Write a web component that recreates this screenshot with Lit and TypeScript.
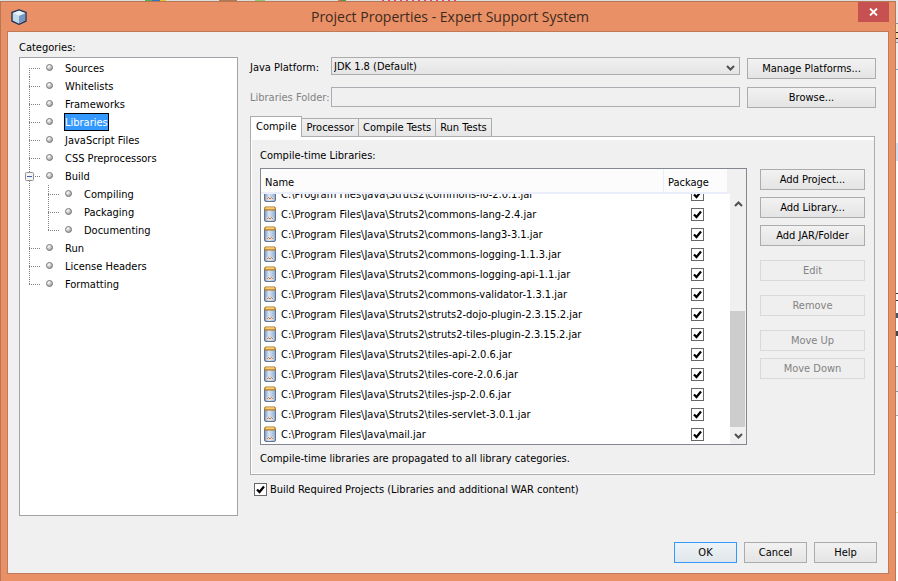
import { LitElement, html, css, svg, nothing } from "lit";
import { classMap } from "lit/directives/class-map.js";

interface Category {
  name: string;
  children?: string[];
}

const CATEGORIES: Category[] = [
  { name: "Sources" },
  { name: "Whitelists" },
  { name: "Frameworks" },
  { name: "Libraries" },
  { name: "JavaScript Files" },
  { name: "CSS Preprocessors" },
  { name: "Build", children: ["Compiling", "Packaging", "Documenting"] },
  { name: "Run" },
  { name: "License Headers" },
  { name: "Formatting" },
];

const TABS = ["Compile", "Processor", "Compile Tests", "Run Tests"];

const LIBRARIES = [
  "Struts2\\commons-io-2.0.1.jar",
  "Struts2\\commons-lang-2.4.jar",
  "Struts2\\commons-lang3-3.1.jar",
  "Struts2\\commons-logging-1.1.3.jar",
  "Struts2\\commons-logging-api-1.1.jar",
  "Struts2\\commons-validator-1.3.1.jar",
  "Struts2\\struts2-dojo-plugin-2.3.15.2.jar",
  "Struts2\\struts2-tiles-plugin-2.3.15.2.jar",
  "Struts2\\tiles-api-2.0.6.jar",
  "Struts2\\tiles-core-2.0.6.jar",
  "Struts2\\tiles-jsp-2.0.6.jar",
  "Struts2\\tiles-servlet-3.0.1.jar",
  "mail.jar",
].map((file) => "C:\\Program Files\\Java\\" + file);

const chevron = (up: boolean) => html`<svg width="9" height="6" viewBox="0 0 9 6" aria-hidden="true">
  <path d=${up ? "M1 5 4.5 1.5 8 5" : "M1 1 4.5 4.5 8 1"} fill="none" stroke="#505050" stroke-width="2" />
</svg>`;

/* Square tick box, shared by the table and the form. */
const tickBox = css`
  input[type="checkbox"] {
    appearance: none; flex: none; box-sizing: border-box; width: 13px; height: 13px; margin: 0; border: 1px solid #686868; background: #fff;
  }
  input[type="checkbox"]:checked {
    background: #fff url("data:image/svg+xml,%3Csvg xmlns='http://www.w3.org/2000/svg' viewBox='0 0 11 11'%3E%3Cpath d='M2 5.5 4.5 8 9 2.5' fill='none' stroke='%23000' stroke-width='2.2'/%3E%3C/svg%3E") center / 11px 11px no-repeat;
  }
`;

/* The category tree, with its dotted connectors. */
class CategoryTree extends LitElement {
  static properties = { selected: { state: true } };
  declare selected: string;

  constructor() {
    super();
    this.selected = "Libraries";
  }

  static styles = css`
    :host { display: block; box-sizing: border-box; background: #fff; border: 1px solid #a0a4a8; padding-top: 1px; }
    ul { list-style: none; margin: 0; padding: 0; }
    .row { display: flex; height: 18px; }
    svg { display: block; flex: none; }
    .item {
      font: inherit; color: #000; background: none; border: 1px solid transparent;
      padding: 2px 0 0; margin: 0; white-space: nowrap;
    }
    .item.selected { background: #3399ff; color: #fff; border-color: #000; }
  `;

  private row(name: string, depth: number, first: boolean, last: boolean, parent = false) {
    const x = 9 + depth * 19;
    const width = 44 + depth * 19;
    return html`<div class="row">
      <svg width=${width} height="18" viewBox="0 0 ${width} 18" aria-hidden="true">
        <defs>
          <radialGradient id="ball" cx="0.35" cy="0.3" r="0.75">
            <stop offset="0" stop-color="#fff" /><stop offset="0.6" stop-color="#c4c4c4" /><stop offset="1" stop-color="#8a8a8a" />
          </radialGradient>
        </defs>
        <g stroke="#808080" stroke-dasharray="1 1" fill="none">
          ${depth ? svg`<path d="M9.5 0V18" />` : nothing}
          <path d="M${x + 0.5} ${first && !depth ? 9 : 0}V${last ? 10 : 18}" />
          <path d="M${x} 9.5H${x + 12}" />
        </g>
        ${parent
          ? svg`<rect x="5.5" y="5.5" width="8" height="8" rx="1" fill="#f4f4f4" stroke="#919191" />
              <path d="M7 9.5h5" stroke="#3f5fb0" />`
          : nothing}
        <circle cx=${x + 20.5} cy="8.5" r="3" fill="url(#ball)" stroke="#7c7c7c" />
      </svg>
      <button class=${classMap({ item: true, selected: this.selected === name })}
        @click=${() => { this.selected = name; }}>${name}</button>
    </div>`;
  }

  render() {
    return html`<ul aria-label="Categories">
      ${CATEGORIES.map((c, i) => html`<li>
        ${this.row(c.name, 0, i === 0, i === CATEGORIES.length - 1, !!c.children)}
        ${c.children
          ? html`<ul>${c.children.map((n, k) => html`<li>${this.row(n, 1, k === 0, k === c.children!.length - 1)}</li>`)}</ul>`
          : nothing}
      </li>`)}
    </ul>`;
  }
}
customElements.define("category-tree", CategoryTree);

/* The table of libraries, with its scroll bar. */
class LibraryList extends LitElement {
  static styles = [tickBox, css`
    :host { display: flex; box-sizing: border-box; background: #fff; border: 1px solid #828790; overflow: hidden; }
    table { flex: 1; display: flex; flex-direction: column; min-width: 0; min-height: 0; }
    thead { display: block; flex: none; background: #f0f0f0; padding-right: 3px; }
    tbody { flex: 1; display: flex; flex-direction: column; justify-content: flex-end; min-height: 0; overflow: hidden; }
    tr { display: grid; grid-template-columns: 1fr 66px; flex: none; height: 20px; }
    thead tr { grid-template-columns: 1fr 63px; height: 25px; box-sizing: border-box; background: #fcfcfc; border-bottom: 2px solid #e9eefa; }
    th { font-weight: normal; text-align: left; padding: 4px 0 0 4px; line-height: 19px; }
    th:first-child { border-right: 1px solid #e9eefa; }
    td { display: flex; align-items: center; padding: 0 0 0 3px; gap: 5px; white-space: nowrap; }
    td:last-child { padding-left: 27px; }
    .path { padding-top: 2px; }
    svg { display: block; flex: none; }
    .bar { flex: none; width: 16px; display: flex; flex-direction: column; background: #f0f0f0; padding-top: 26px; box-sizing: border-box; }
    .bar button { flex: none; height: 17px; border: 0; padding: 0; background: none; display: grid; place-items: center; }
    .track { flex: 1; display: flex; flex-direction: column; justify-content: flex-end; min-height: 0; }
    .thumb { height: 54%; margin-right: 1px; background: #cdcdcd; }
  `];

  render() {
    return html`
      <table>
        <thead><tr><th>Name</th><th>Package</th></tr></thead>
        <tbody>
          ${LIBRARIES.map((path) => html`<tr>
            <td>
              <svg width="12" height="16" viewBox="0 0 12 16" aria-hidden="true">
                <defs>
                  <linearGradient id="glass"><stop offset="0" stop-color="#7695bd" /><stop offset="0.4" stop-color="#dce9f8" /><stop offset="1" stop-color="#8cabd2" /></linearGradient>
                </defs>
                <path d="M.5 3.5h11v10.500q0 1.500-1.500 1.500h-8q-1.500 0-1.500-1.500z" fill="url(#glass)" stroke="#65758c" />
                <rect x="0.500" y="1" width="11" height="3" rx="1.500" fill="#f0b44c" stroke="#a8701c" />
                <path d="M2 2h8" stroke="#ffe2a4" />
                <path d="M2.500 11h7v3h-7z" fill="#e6dcd8" />
                <path d="M3 13q1.500-3 3 0q1.500-3 3 0" fill="none" stroke="#b87d58" />
              </svg>
              <span class="path">${path}</span>
            </td>
            <td><input type="checkbox" checked aria-label="Package ${path}" /></td>
          </tr>`)}
        </tbody>
      </table>
      <div class="bar">
        <button aria-label="Scroll up">${chevron(true)}</button>
        <div class="track"><div class="thumb"></div></div>
        <button aria-label="Scroll down">${chevron(false)}</button>
      </div>`;
  }
}
customElements.define("library-list", LibraryList);

class AppRoot extends LitElement {
  static properties = { tab: { state: true } };
  declare tab: string;

  constructor() {
    super();
    this.tab = TABS[0];
  }

  static styles = [tickBox, css`
    :host {
      display: flex; box-sizing: border-box; min-height: 100vh; padding: 1px 2px 0 0;
      font: 11px/14px "DejaVu Sans Condensed", "DejaVu Sans", sans-serif; color: #000;
      background:
        linear-gradient(90deg, transparent 145px, #4caf50 145px 152px, #2f74c0 152px 160px, #e8c52a 160px 166px, transparent 166px 219px, #b07a50 219px 237px, transparent 237px 255px, #8ccf70 255px 265px, transparent 265px 338px, #e07038 338px 341px, #4f9a48 341px 346px, transparent 346px) 0 0 / 100% 1px no-repeat,
        repeating-linear-gradient(90deg, #e84070 0 2px, transparent 2px 6px) 382px 0 / 75px 1px no-repeat,
        linear-gradient(#e8e8e8 23px, #8a93a0 23px 24px, #f2e6cc 24px 32px, #302020 32px 33px, #f2d9a8 33px 38px, #302020 38px 39px, #ddd 39px 42px, #8a93a0 42px 43px, #eee 43px 69px, #7aa6c8 69px 70px, #f6f6f6 70px 143px, #cfdff2 143px 161px, #fff 161px 293px, #333 293px 294px, #fff 294px 300px, #333 300px 301px, #fff 301px 313px, #456 313px 318px, #fff 318px 331px, #444 331px 336px, #fff 336px 366px, #8a93a0 366px 367px, #e6e6e6 367px 391px, #8a93a0 391px 392px, #f0f0f0 392px 415px, #aaa 415px 416px, #fff 416px 512px, #f0d8a8 512px 513px, #fff 513px) right top / 2px 100% no-repeat,
        #dcdfe0;
    }
    .dialog { flex: 1; display: flex; flex-direction: column; min-width: 0; background: #ea9066; border: 1px solid #b97654; border-bottom: 0; padding: 0 6px 7px; }
    .titlebar { display: grid; grid-template-columns: 1fr auto 1fr; align-items: center; height: 29px; padding-left: 4px; }
    h1 { margin: 0; font: 14px/20px "Open Sans", sans-serif; color: #3c2a20; }
    .titlebar svg { display: block; }
    .close { justify-self: end; align-self: start; width: 31px; height: 20px; border: 0; padding: 0; background: #c75050; display: grid; place-items: center; }
    .content { flex: 1; display: flex; flex-direction: column; background: #f0f0f0; border: 1px solid #c07a58; padding: 9px 11px 10px; }
    .heading { font: inherit; margin: 0; white-space: nowrap; }
    .columns { flex: 1; display: grid; grid-template-columns: 219px minmax(0, 1fr); column-gap: 12px; grid-template-rows: auto 1fr; row-gap: 2px; }
    category-tree { grid-row: 2; }
    .settings { grid-area: 2 / 2; display: flex; flex-direction: column; min-width: 0; padding: 0 1px 20px 0; }
    .form { display: grid; grid-template-columns: 74px 1fr 129px; grid-template-rows: 22px 21px; gap: 8px 7px; margin-bottom: 8px; white-space: nowrap; }
    .form label { align-self: center; }
    .form .off { color: #838383; }
    .push {
      font: inherit; color: #000; box-sizing: border-box; height: 21px; padding: 0; white-space: nowrap;
      border: 1px solid #acacac; background: linear-gradient(#f2f2f2, #e4e4e4);
    }
    .push:disabled { color: #838383; border-color: #d9d9d9; background: #efefef; }
    .form .push { align-self: end; }
    .combo { position: relative; height: 18px; }
    .combo svg { position: absolute; right: 5px; top: 8px; pointer-events: none; }
    select {
      appearance: none; box-sizing: border-box; display: block; width: 100%; height: 18px; font: inherit; color: #000;
      border: 1px solid #acacac; border-radius: 0; padding: 2px 20px 0 2px; background: linear-gradient(#f0f0f0, #e5e5e5);
    }
    .folder { box-sizing: border-box; width: 100%; height: 20px; border: 1px solid #abadb3; background: #f0f0f0; font: inherit; padding: 0 2px; }
    .tabs { display: flex; align-items: flex-end; }
    .tab {
      font: inherit; color: #000; height: 18px; padding: 0 4px; border: 1px solid #acacac; border-bottom: 0; margin-left: -1px;
      background: linear-gradient(#f0f0f0, #e6e6e6); white-space: nowrap; box-sizing: border-box;
    }
    .tab.active { height: 21px; margin: 0 0 -1px; padding: 0 5px 1px; background: #fff; z-index: 1; }
    .panel {
      flex: 1; display: grid; grid-template-columns: minmax(0, 1fr) 105px; grid-template-rows: auto 1fr auto; gap: 5px 13px;
      margin-right: 1px; box-sizing: border-box; border: 1px solid #acacac; padding: 12px 9px 8px;
      box-shadow: inset 0 3px #fff, inset 1px -1px #fff;
    }
    .panel h2, .panel p { grid-column: 1 / -1; font: inherit; margin: 0; }
    .panel p { padding-top: 2px; }
    library-list { height: 0; min-height: 100%; }
    .actions { display: flex; flex-direction: column; gap: 14px; padding-top: 1px; }
    .group { display: flex; flex-direction: column; gap: 7px; }
    .check { display: flex; align-items: center; gap: 3px; height: 13px; margin: 8px 0 0 4px; white-space: nowrap; }
    .footer { display: flex; justify-content: flex-end; gap: 7px; margin-top: 26px; }
    .footer .push { width: 63px; }
    .footer .default { border-color: #3399ff; background: linear-gradient(#eef3f8, #e1e6ea); }
  `];

  render() {
    return html`
      <div class="dialog">
        <header class="titlebar">
          <svg width="16" height="16" viewBox="0 0 16 16" aria-hidden="true">
            <path d="M8 .8 15 3.500V12L8 15.300 1 12V3.500z" fill="#b9d2e4" stroke="#26365a" stroke-width="1.400" stroke-linejoin="round" />
            <path d="M8 1.800 14 4 8 6.800 2 4z" fill="#e8f3f8" />
            <path d="M2 4.500 8 7v7.300L2 11.500z" fill="#c3dbe9" />
            <path d="M14 4.500 8 7v7.300l6-2.800z" fill="#7597c0" />
          </svg>
          <h1>Project Properties - Expert Support System</h1>
          <button class="close" aria-label="Close">
            <svg width="9" height="8" viewBox="0 0 9 8"><path d="M1 .5 8 7.500M8 .5 1 7.500" stroke="#fff" stroke-width="1.800" /></svg>
          </button>
        </header>
        <main class="content">
          <div class="columns">
            <h2 class="heading">Categories:</h2>
            <category-tree></category-tree>
            <section class="settings">
              <div class="form">
                <label for="platform">Java Platform:</label>
                <div class="combo">
                  <select id="platform"><option>JDK 1.8 (Default)</option></select>
                  ${chevron(false)}
                </div>
                <button class="push">Manage Platforms...</button>
                <label class="off" for="folder">Libraries Folder:</label>
                <input class="folder" id="folder" type="text" disabled />
                <button class="push">Browse...</button>
              </div>
              <div class="tabs" role="tablist">
                ${TABS.map((t) => html`<button role="tab" aria-selected=${this.tab === t}
                  class=${classMap({ tab: true, active: this.tab === t })} @click=${() => { this.tab = t; }}>${t}</button>`)}
              </div>
              <div class="panel" role="tabpanel">
                <h2>Compile-time Libraries:</h2>
                <library-list></library-list>
                <div class="actions">
                  <div class="group">
                    <button class="push">Add Project...</button>
                    <button class="push">Add Library...</button>
                    <button class="push">Add JAR/Folder</button>
                  </div>
                  <button class="push" disabled>Edit</button>
                  <button class="push" disabled>Remove</button>
                  <div class="group">
                    <button class="push" disabled>Move Up</button>
                    <button class="push" disabled>Move Down</button>
                  </div>
                </div>
                <p>Compile-time libraries are propagated to all library categories.</p>
              </div>
              <label class="check"><input type="checkbox" checked />Build Required Projects (Libraries and additional WAR content)</label>
            </section>
          </div>
          <footer class="footer">
            <button class="push default">OK</button>
            <button class="push">Cancel</button>
            <button class="push">Help</button>
          </footer>
        </main>
      </div>`;
  }
}
customElements.define("app-root", AppRoot);
